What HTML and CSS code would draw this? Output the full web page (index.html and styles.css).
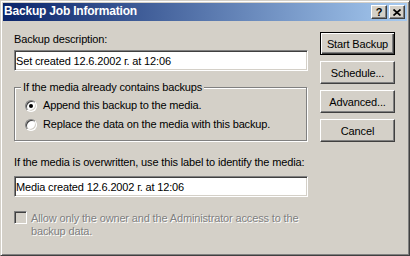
FILE: index.html
```html
<!DOCTYPE html>
<html lang="en">
<head>
    <meta charset="UTF-8">
    <title>Backup Job Information</title>
    <link rel="stylesheet" href="styles.css">
</head>
<body>
    <div class="window">
        <div class="titlebar">
            <span class="title">Backup Job Information</span>
            <div class="caption-buttons">
                <button class="cap-btn help">?</button>
                <button class="cap-btn">
                    <svg width="8" height="7" viewBox="0 0 8 7">
                        <path d="M0.5 0.5L7.5 6.5M7.5 0.5L0.5 6.5" stroke="#000" stroke-width="1.7" fill="none"/>
                    </svg>
                </button>
            </div>
        </div>

        <div class="dialog">
            <div class="main">
                <label class="label" for="description">Backup description:</label>
                <input class="edit" id="description" type="text" value="Set created 12.6.2002 г. at 12:06">

                <fieldset class="group">
                    <legend>If the media already contains backups</legend>
                    <label class="option"><span class="radio checked"></span>Append this backup to the media.</label>
                    <label class="option"><span class="radio"></span>Replace the data on the media with this backup.</label>
                </fieldset>

                <label class="label label-media" for="mediaLabel">If the media is overwritten, use this label to identify the media:</label>
                <input class="edit edit-media" id="mediaLabel" type="text" value="Media created 12.6.2002 г. at 12:06">

                <label class="check disabled">
                    <span class="box"></span>
                    <span>Allow only the owner and the Administrator access to the<br>backup data.</span>
                </label>
            </div>

            <div class="actions">
                <button class="btn default">Start Backup</button>
                <button class="btn">Schedule...</button>
                <button class="btn">Advanced...</button>
                <button class="btn">Cancel</button>
            </div>
        </div>
    </div>
</body>
</html>
```

FILE: styles.css
```css
body {
    margin: 0;
    font-family: "Liberation Sans", Arial, sans-serif;
    font-size: 11px;
    letter-spacing: -0.15px;
    color: #000;
}
.window {
    width: 410px;
    height: 256px;
    box-sizing: border-box;
    background-color: #d4d0c8;
    border: 1px solid;
    border-color: #d4d0c8 #404040 #404040 #d4d0c8;
    box-shadow: inset 1px 1px #fff, inset -1px -1px #808080;
    padding: 2px;
}
.titlebar {
    height: 18px;
    box-sizing: border-box;
    display: flex;
    align-items: center;
    justify-content: space-between;
    padding: 0 2px 0 1px;
    background: linear-gradient(to right, #0a246a, #a6caf0);
}
.title {
    align-self: flex-start;
    color: #fff;
    font-weight: bold;
    font-size: 12px;
    line-height: 16px;
    letter-spacing: -0.2px;
}
.caption-buttons {
    display: flex;
    gap: 2px;
}
.cap-btn {
    width: 16px;
    height: 14px;
    padding: 0;
    box-sizing: border-box;
    display: flex;
    align-items: center;
    justify-content: center;
    background-color: #d4d0c8;
    border: 1px solid;
    border-color: #fff #404040 #404040 #fff;
    box-shadow: inset -1px -1px #808080, inset 1px 1px #d4d0c8;
    font-family: "Liberation Sans", Arial, sans-serif;
    font-weight: bold;
    font-size: 11px;
    line-height: 12px;
    color: #000;
}
.dialog {
    display: flex;
    align-items: flex-start;
    gap: 12px;
    padding: 12px 0 0 11px;
}
.main {
    width: 294px;
}
.label {
    display: block;
    line-height: 13px;
}
.edit {
    display: block;
    width: 100%;
    height: 21px;
    box-sizing: border-box;
    margin: 4px 0 0;
    padding: 0 0 0 1px;
    border: 1px solid;
    border-color: #808080 #fff #fff #808080;
    box-shadow: inset 1px 1px #404040, inset -1px -1px #d4d0c8;
    background-color: #fff;
    font-family: "Liberation Sans", Arial, sans-serif;
    font-size: 11px;
    letter-spacing: -0.15px;
    color: #000;
    outline: none;
}
.edit-media {
    margin-top: 7px;
}
.group {
    margin: 10px 0 0;
    width: 293px;
    min-width: 0;
    box-sizing: border-box;
    padding: 5px 0 9px 0;
    border: 1px solid #808080;
    box-shadow: inset 1px 1px #fff, 1px 1px #fff;
}
.group legend {
    margin-left: 6px;
    padding: 0 2px;
    line-height: 13px;
    background-color: #d4d0c8;
}
.option {
    display: flex;
    align-items: flex-start;
    gap: 6px;
    margin-left: 10px;
    line-height: 13px;
}
.option + .option {
    margin-top: 6px;
}
.radio {
    flex: none;
    width: 12px;
    height: 12px;
    margin-top: 1px;
    box-sizing: border-box;
    border-radius: 50%;
    border: 1px solid;
    border-color: #808080 #fff #fff #808080;
    box-shadow: inset 1px 1px #404040, inset -1px -1px #d4d0c8;
    background-color: #fff;
    display: flex;
    align-items: center;
    justify-content: center;
}
.radio.checked::after {
    content: "";
    width: 4px;
    height: 4px;
    border-radius: 50%;
    background-color: #000;
}
.label-media {
    margin-top: 15px;
}
.check {
    display: flex;
    align-items: flex-start;
    gap: 4px;
    margin-top: 15px;
    line-height: 13px;
}
.check.disabled {
    color: #808080;
    text-shadow: 1px 1px #fff;
}
.box {
    flex: none;
    width: 13px;
    height: 13px;
    margin-top: -1px;
    box-sizing: border-box;
    border: 1px solid;
    border-color: #808080 #fff #fff #808080;
    box-shadow: inset 1px 1px #404040, inset -1px -1px #d4d0c8;
    background-color: #d4d0c8;
}
.actions {
    display: flex;
    flex-direction: column;
    gap: 6px;
    width: 75px;
    margin-top: -1px;
}
.btn {
    width: 75px;
    height: 23px;
    padding: 0;
    box-sizing: border-box;
    background-color: #d4d0c8;
    border: 1px solid;
    border-color: #fff #404040 #404040 #fff;
    box-shadow: inset -1px -1px #808080, inset 1px 1px #d4d0c8;
    font-family: "Liberation Sans", Arial, sans-serif;
    font-size: 11px;
    letter-spacing: -0.15px;
    color: #000;
}
.btn.default {
    border-color: #000;
    box-shadow: inset 1px 1px #fff, inset -1px -1px #404040, inset -2px -2px #808080;
}
```
